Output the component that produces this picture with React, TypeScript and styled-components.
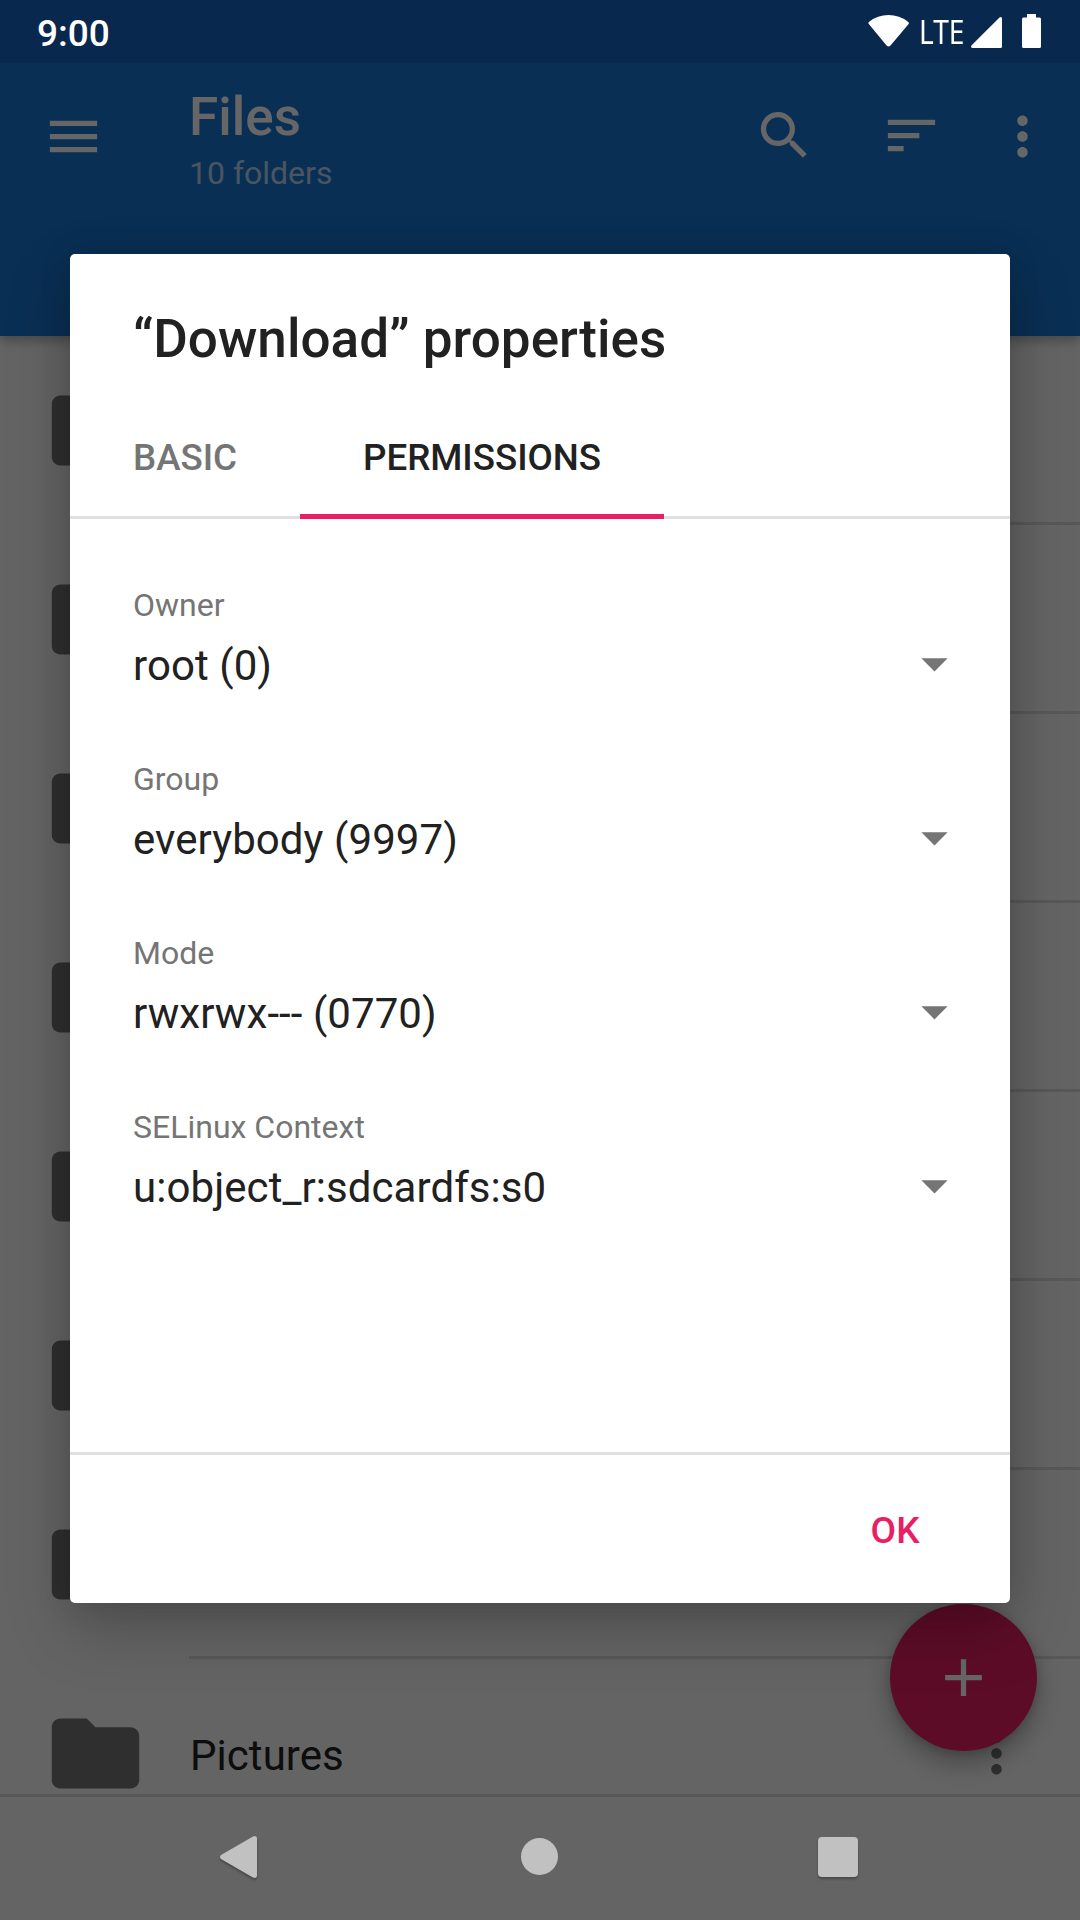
import React from "react";
import styled, { createGlobalStyle } from "styled-components";

const GlobalStyle = createGlobalStyle`
  * { box-sizing: border-box; }
  body { margin: 0; background: #646464; }
  button { border: 0; padding: 0; background: none; font: inherit; color: inherit; }
`;

const Screen = styled.div`
  position: relative;
  width: 1080px;
  height: 1920px;
  overflow: hidden;
  background: #fafafa;
  color: #212121;
  font-family: Roboto, "Liberation Sans", sans-serif;
`;

/* ---------- file list behind the dialog ---------- */

const FilesPage = styled.div`
  display: flex;
  flex-direction: column;
  height: 1920px;
`;

const AppBar = styled.header`
  flex: none;
  height: 336px;
  background: #1976d2;
  box-shadow: 0 5px 10px rgba(0, 0, 0, 0.28);
  z-index: 1;
`;

const StatusBackdrop = styled.div`
  height: 63px;
  background: #1565c0;
`;

const Toolbar = styled.div`
  display: flex;
  align-items: flex-start;
  height: 147px;
  padding: 42px 26px 0 42px;
  color: #fff;
`;

const Titles = styled.div`
  flex: 1;
  margin: -18px 0 0 84px;
`;

const PageTitle = styled.h1`
  margin: 0;
  font-size: 53px;
  line-height: 60px;
  font-weight: 500;
  letter-spacing: 0.05px;
`;

const Subtitle = styled.div`
  font-size: 32px;
  line-height: 38px;
  margin-top: 7px;
  color: rgba(255, 255, 255, 0.7);
`;

const Icon = styled.svg<{ $size?: number }>`
  display: block;
  flex: none;
  width: ${(p) => p.$size ?? 63}px;
  height: ${(p) => p.$size ?? 63}px;
  fill: currentColor;
`;

const Actions = styled.div`
  display: grid;
  grid-template-columns: 127px 111px 63px;
`;

const Action = styled.button<{ $lift?: number }>`
  display: block;
  align-self: start;
  margin-top: ${(p) => -(p.$lift ?? 0)}px;
`;

const FileList = styled.ul`
  flex: 1;
  min-height: 0;
  margin: 0;
  padding: 0;
  list-style: none;
  overflow: hidden;
`;

const FileRow = styled.li`
  display: flex;
  height: 189px;
  padding-left: 43px;
`;

const FolderCell = styled.div`
  width: 146px;
  padding-top: 42px;
  color: #757575;
`;

const FileCell = styled.div`
  flex: 1;
  display: flex;
  align-items: center;
  justify-content: space-between;
  padding: 3px 52px 0 0;
  border-bottom: 3px solid rgba(0, 0, 0, 0.12);
`;

const FileName = styled.span`
  font-size: 42px;
  line-height: 50px;
  letter-spacing: 0.05px;
  padding: 5px 0 0 1px;
`;

const FileMenu = styled.button`
  color: #757575;
`;

const NavBackdrop = styled.div`
  flex: none;
  height: 126px;
  border-top: 3px solid rgba(0, 0, 0, 0.12);
`;

const Fab = styled.button`
  position: absolute;
  right: 43px;
  top: 1604px;
  z-index: 2;
  width: 147px;
  height: 147px;
  border-radius: 50%;
  display: grid;
  place-items: center;
  background: #e91e63;
  color: #fff;
  box-shadow: 0 12px 26px rgba(0, 0, 0, 0.3), 0 2px 10px rgba(0, 0, 0, 0.14);
`;

/* ---------- layers over the page ---------- */

const Scrim = styled.div`
  position: absolute;
  inset: 0;
  z-index: 3;
  background: rgba(0, 0, 0, 0.6);
  padding: 254px 70px 0;
`;

const StatusBar = styled.div`
  position: absolute;
  inset: 0 0 auto;
  z-index: 4;
  height: 63px;
  display: flex;
  justify-content: space-between;
  padding: 0 39px 0 37px;
  color: #fff;
`;

const Clock = styled.time`
  font-size: 37px;
  line-height: 68px;
  font-weight: 500;
`;

const StatusIcons = styled.div`
  display: flex;
  align-items: flex-start;
`;

const Network = styled.span`
  width: 52px;
  font-family: "Noto Sans", "Open Sans", sans-serif;
  font-size: 32px;
  line-height: 63px;
  transform: scaleX(0.88);
  transform-origin: left;
`;

const StatusGlyph = styled.svg`
  display: block;
  height: 63px;
  fill: currentColor;
`;

const NavBar = styled.nav`
  position: absolute;
  inset: auto 0 0;
  z-index: 4;
  height: 126px;
  display: flex;
  align-items: center;
  justify-content: space-between;
  padding: 0 202px 0 200px;
  color: #c1c1c1;
`;

const NavGlyph = styled.svg<{ $flat?: boolean }>`
  display: block;
  width: 80px;
  height: 80px;
  fill: currentColor;
  filter: ${(p) => (p.$flat ? "none" : "drop-shadow(0 2px 1px rgba(0, 0, 0, 0.28))")};
`;

/* ---------- dialog ---------- */

const Dialog = styled.section`
  display: flex;
  flex-direction: column;
  height: 1349px;
  border-radius: 5px;
  background: #fff;
  box-shadow: 0 26px 64px rgba(0, 0, 0, 0.22), 0 0 32px rgba(0, 0, 0, 0.12);
`;

const DialogTitle = styled.h2`
  margin: 0;
  padding: 54px 63px 23px;
  font-size: 53px;
  line-height: 62px;
  font-weight: 500;
  letter-spacing: 0.05px;
`;

const Tabs = styled.div`
  display: flex;
  height: 126px;
  box-shadow: inset 0 -3px #e0e0e0;
`;

const Tab = styled.button<{ $active?: boolean }>`
  padding: 9px 63px 0;
  font-size: 36.75px;
  line-height: 44px;
  font-weight: 500;
  letter-spacing: -0.04px;
  color: ${(p) => (p.$active ? "#212121" : "#757575")};
  border-bottom: 5px solid ${(p) => (p.$active ? "#e91e63" : "transparent")};
`;

const Fields = styled.div`
  flex: 1;
  padding: 68px 44px 0 63px;
`;

const Field = styled.div`
  height: 174px;
`;

const FieldLabel = styled.div`
  font-size: 32px;
  line-height: 36px;
  color: #757575;
`;

const FieldValue = styled.div`
  display: flex;
  justify-content: space-between;
  margin-top: 9px;
  font-size: 42px;
  line-height: 67px;
  letter-spacing: 0.07px;
`;

const Arrow = styled.span`
  color: #757575;
`;

const Footer = styled.footer`
  display: flex;
  justify-content: flex-end;
  align-items: center;
  height: 151px;
  padding: 3px 90px 0 0;
  border-top: 3px solid #e0e0e0;
`;

const OkButton = styled.button`
  font-size: 37px;
  line-height: 44px;
  font-weight: 500;
  letter-spacing: 0.3px;
  color: #e91e63;
`;

const paths = {
  menu: "M3 18h18v-2H3v2zm0-5h18v-2H3v2zm0-7v2h18V6H3z",
  search:
    "M15.5 14h-.79l-.28-.27C15.41 12.59 16 11.11 16 9.5 16 5.91 13.09 3 9.5 3S3 5.91 3 9.5 5.91 16 9.5 16c1.61 0 3.09-.59 4.23-1.57l.27.28v.79l5 4.99L20.49 19l-4.99-5zm-6 0C7.01 14 5 11.99 5 9.5S7.01 5 9.5 5 14 7.01 14 9.5 11.99 14 9.5 14z",
  sort: "M3 18h6v-2H3v2zM3 6v2h18V6H3zm0 7h12v-2H3v2z",
  more: "M12 8c1.1 0 2-.9 2-2s-.9-2-2-2-2 .9-2 2 .9 2 2 2zm0 2c-1.1 0-2 .9-2 2s.9 2 2 2 2-.9 2-2-.9-2-2-2zm0 6c-1.1 0-2 .9-2 2s.9 2 2 2 2-.9 2-2-.9-2-2-2z",
  folder:
    "M10 4H4c-1.1 0-1.99.9-1.99 2L2 18c0 1.1.9 2 2 2h16c1.1 0 2-.9 2-2V8c0-1.1-.9-2-2-2h-8l-2-2z",
  add: "M19 13h-6v6h-2v-6H5v-2h6V5h2v6h6v2z",
  drop: "M7 10l5 5 5-5z",
};

const Glyph = ({ name, size }: { name: keyof typeof paths; size?: number }) => (
  <Icon viewBox="0 0 24 24" $size={size}>
    <path d={paths[name]} />
  </Icon>
);

const files = ["", "", "", "", "", "", "", "Pictures"];

const fields = [
  { label: "Owner", value: "root (0)" },
  { label: "Group", value: "everybody (9997)" },
  { label: "Mode", value: "rwxrwx--- (0770)" },
  { label: "SELinux Context", value: "u:object_r:sdcardfs:s0" },
];

export default function App() {
  return (
    <Screen>
      <GlobalStyle />
      <FilesPage>
        <AppBar>
          <StatusBackdrop />
          <Toolbar>
            <Action>
              <Glyph name="menu" />
            </Action>
            <Titles>
              <PageTitle>Files</PageTitle>
              <Subtitle>10 folders</Subtitle>
            </Titles>
            <Actions>
              <Action $lift={1}>
                <Glyph name="search" />
              </Action>
              <Action $lift={1}>
                <Glyph name="sort" />
              </Action>
              <Action>
                <Glyph name="more" />
              </Action>
            </Actions>
          </Toolbar>
        </AppBar>
        <FileList>
          {files.map((name, i) => (
            <FileRow key={i}>
              <FolderCell>
                <Glyph name="folder" size={105} />
              </FolderCell>
              <FileCell>
                <FileName>{name}</FileName>
                <FileMenu>
                  <Glyph name="more" />
                </FileMenu>
              </FileCell>
            </FileRow>
          ))}
        </FileList>
        <NavBackdrop />
      </FilesPage>
      <Fab>
        <Glyph name="add" />
      </Fab>

      <Scrim>
        <Dialog>
          <DialogTitle>“Download” properties</DialogTitle>
          <Tabs>
            <Tab>BASIC</Tab>
            <Tab $active>PERMISSIONS</Tab>
          </Tabs>
          <Fields>
            {fields.map((f) => (
              <Field key={f.label}>
                <FieldLabel>{f.label}</FieldLabel>
                <FieldValue>
                  {f.value}
                  <Arrow>
                    <Glyph name="drop" />
                  </Arrow>
                </FieldValue>
              </Field>
            ))}
          </Fields>
          <Footer>
            <OkButton>OK</OkButton>
          </Footer>
        </Dialog>
      </Scrim>

      <StatusBar>
        <Clock>9:00</Clock>
        <StatusIcons>
          <StatusGlyph width="51" viewBox="868 0 51 63">
            <path d="M869 24.3Q867.6 23 869.2 21.7Q877.5 15 888.5 15T908 21.7Q909.6 23 908.4 24.3L890.3 45.8Q888.5 47.4 886.8 45.8Z" />
          </StatusGlyph>
          <Network>LTE</Network>
          <StatusGlyph width="70" viewBox="971 0 70 63">
            <path d="M999.5 17.4Q1002 16 1002 18.4V46.5Q1002 48 1000.5 48H972.4Q970.4 47.6 971.4 45.4Z" />
            <path d="M1027 14H1036V17.4H1039.5Q1041 17.4 1041 19V46.4Q1041 48 1039.5 48H1023.5Q1022 48 1022 46.4V19Q1022 17.4 1023.5 17.4H1027Z" />
          </StatusGlyph>
        </StatusIcons>
      </StatusBar>

      <NavBar>
        <NavGlyph viewBox="200 1817 80 80">
          <path d="M221 1855L253 1836.4Q257 1835 257 1838.6V1875.6Q257 1879 253 1877.6L221 1859Q219 1857 221 1855Z" />
        </NavGlyph>
        <NavGlyph $flat viewBox="499 1817 80 80">
          <circle cx="539.5" cy="1856.5" r="18.5" />
        </NavGlyph>
        <NavGlyph viewBox="798 1817 80 80">
          <rect x="818" y="1837" width="40" height="40" rx="4" />
        </NavGlyph>
      </NavBar>
    </Screen>
  );
}
